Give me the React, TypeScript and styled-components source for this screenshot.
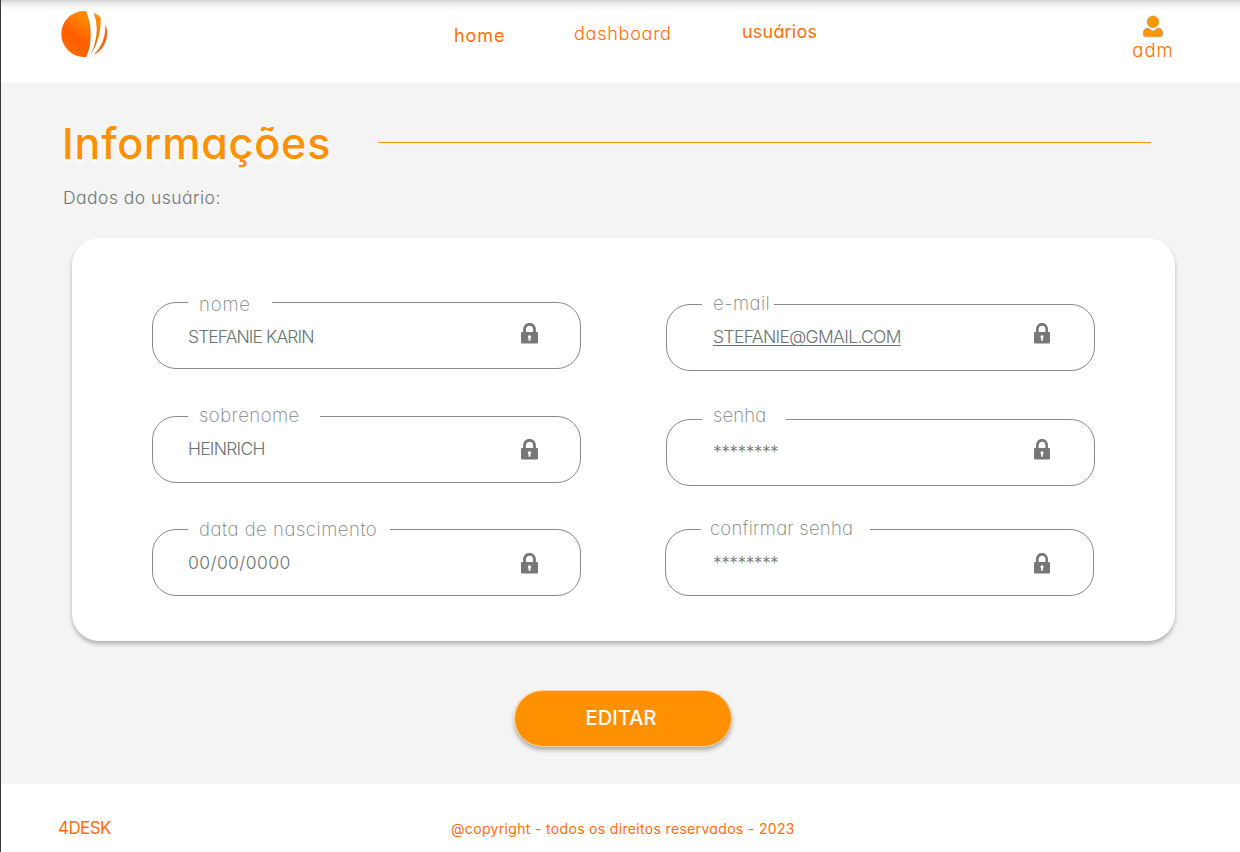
import React from "react";
import styled, { createGlobalStyle } from "styled-components";

const GlobalStyle = createGlobalStyle`
  *, *::before, *::after { box-sizing: border-box; }
  body {
    margin: 0;
    background: #fff;
    font-family: Inter, "Open Sans", sans-serif;
    font-feature-settings: "cv11" 1;
  }
`;

const Page = styled.div`
  display: flex;
  flex-direction: column;
  width: 1240px;
  height: 852px;
  overflow: hidden;
  border-left: 1px solid #38383d;
  background: #fff;
`;

const Header = styled.header`
  display: flex;
  align-items: flex-start;
  height: 83px;
  padding-left: 59px;
  background: linear-gradient(#cfcfcf 0, #d9d9d9 1px, #e8e8e8 3px, #f6f6f6 6px, #fff 11px);
`;

const Logo = styled.svg`
  width: 48px;
  height: 48px;
  margin-top: 10px;
`;

const Nav = styled.nav`
  display: flex;
  align-items: flex-start;
  width: 1022px;
  padding-left: 346px;
`;

const NavLink = styled.a<{ $width: number; $top: number; $weight: number; $spacing: number }>`
  width: ${(p) => p.$width}px;
  margin-top: ${(p) => p.$top}px;
  font-size: 18px;
  line-height: 20px;
  font-weight: ${(p) => p.$weight};
  letter-spacing: ${(p) => p.$spacing}px;
  color: #ff6f0a;
  white-space: nowrap;
`;

const Account = styled.div`
  display: flex;
  flex-direction: column;
  align-items: center;
  width: 46px;
  padding-top: 15px;
  font-size: 18.5px;
  line-height: 20px;
  font-weight: 350;
  letter-spacing: 1.1px;
  color: #ff6f0a;
`;

const AccountIcon = styled.svg`
  width: 22px;
  height: 24px;
  margin-bottom: 1px;
`;

const Main = styled.main`
  height: 701px;
  padding-top: 36px;
  background: #f4f4f4;
`;

const TitleRow = styled.div`
  display: flex;
  align-items: center;
  height: 48px;
  padding-left: 61px;
`;

const Title = styled.h1`
  width: 316px;
  margin: 0;
  font-size: 43px;
  line-height: 48px;
  font-weight: 530;
  letter-spacing: 0.85px;
  color: #ff9100;
  text-shadow: 0 4px 4px #fff;
  white-space: nowrap;
`;

const Rule = styled.div`
  width: 773px;
  height: 1px;
  margin-top: -1px;
  background: #ff9100;
`;

const Subtitle = styled.p`
  margin: 21px 0 0 62px;
  font-size: 17.5px;
  line-height: 20px;
  font-weight: 300;
  letter-spacing: 0.47px;
  color: #707676;
`;

const Card = styled.section`
  display: flex;
  gap: 85px;
  width: 1103px;
  height: 403px;
  margin: 30px 0 0 71px;
  padding: 64px 0 0 80px;
  border-radius: 27px;
  background: #fff;
  box-shadow: 0 3px 4px rgba(0, 0, 0, 0.27);
`;

const Column = styled.div`
  width: 429px;
`;

const FieldBox = styled.fieldset<{ $top: number; $shift: number }>`
  display: block;
  min-width: 0;
  width: 429px;
  height: 67px;
  margin: ${(p) => p.$top}px 0 0 ${(p) => p.$shift}px;
  padding: 0;
  border: 1px solid #858a8a;
  border-radius: 24px;
`;

const Legend = styled.legend<{ $width: number; $indent: number }>`
  width: ${(p) => p.$width}px;
  height: 1px;
  margin-left: 35px;
  padding: 0 0 0 ${(p) => p.$indent}px;
`;

const LegendText = styled.div<{ $drop: number; $spacing: number }>`
  margin-top: ${(p) => p.$drop}px;
  font-size: 18.5px;
  line-height: 1px;
  font-weight: 200;
  letter-spacing: ${(p) => p.$spacing}px;
  color: #7c8282;
  white-space: nowrap;
`;

const FieldBody = styled.div<{ $indent: number }>`
  display: flex;
  align-items: flex-start;
  justify-content: space-between;
  padding: 0 42px 0 ${(p) => p.$indent}px;
`;

const Value = styled.span<{ $top: number; $spacing: number; $underline?: boolean }>`
  margin-top: ${(p) => p.$top}px;
  font-size: 17.5px;
  line-height: 20px;
  font-weight: 280;
  letter-spacing: ${(p) => p.$spacing}px;
  color: #6b7272;
  text-decoration: ${(p) => (p.$underline ? "underline" : "none")};
  text-decoration-thickness: 1px;
  text-underline-offset: 2px;
  text-decoration-skip-ink: none;
`;

const LockSvg = styled.svg<{ $top: number; $width: number; $right: number }>`
  width: ${(p) => p.$width}px;
  height: 21px;
  margin: ${(p) => p.$top}px ${(p) => p.$right}px 0 0;
`;

const EditButton = styled.button`
  display: block;
  width: 218px;
  height: 57px;
  margin: 49px 0 0 513px;
  padding: 0 4px 2px 0;
  border: 1px solid #ffd9a6;
  border-radius: 29px;
  background: #ff9100;
  box-shadow: 0 3px 4px rgba(0, 0, 0, 0.3);
  font-family: inherit;
  font-size: 20px;
  font-weight: 500;
  letter-spacing: 0.1px;
  color: #fff;
`;

const Footer = styled.footer`
  display: flex;
  height: 68px;
  padding: 34px 0 0 57px;
  line-height: 20px;
  color: #ff6f0a;
`;

const Brand = styled.span`
  width: 393px;
  font-size: 17px;
  letter-spacing: -0.6px;
`;

const Copyright = styled.span`
  margin-top: 1px;
  font-size: 14px;
  letter-spacing: 0.33px;
`;

interface FieldData {
  label: string;
  value: string;
  top: number;
  shift: number;
  gap: number;
  indent: number;
  drop: number;
  labelSpacing: number;
  valueIndent: number;
  valueTop: number;
  valueSpacing: number;
  lockTop: number;
  lockWidth: number;
  lockRight: number;
  underline?: boolean;
}

const leftFields: FieldData[] = [
  { label: "nome", value: "STEFANIE KARIN", top: 0, shift: 0, gap: 84, indent: 11, drop: 2, labelSpacing: 0.85, valueIndent: 35, valueTop: 24, valueSpacing: -0.92, lockTop: 20, lockWidth: 17, lockRight: 0 },
  { label: "sobrenome", value: "HEINRICH", top: 47, shift: 0, gap: 132, indent: 11, drop: -1, labelSpacing: 0.5, valueIndent: 35, valueTop: 22, valueSpacing: -0.75, lockTop: 22, lockWidth: 17, lockRight: 0 },
  { label: "data de nascimento", value: "00/00/0000", top: 46, shift: 0, gap: 202, indent: 11, drop: 0, labelSpacing: 0.55, valueIndent: 35, valueTop: 23, valueSpacing: 0.4, lockTop: 23, lockWidth: 17, lockRight: 0 },
];

const rightFields: FieldData[] = [
  { label: "e-mail", value: "STEFANIE@GMAIL.COM", top: 2, shift: 0, gap: 72, indent: 11, drop: -1, labelSpacing: 0.5, valueIndent: 46, valueTop: 22, valueSpacing: -0.64, lockTop: 18, lockWidth: 16, lockRight: 2, underline: true },
  { label: "senha", value: "********", top: 48, shift: 0, gap: 84, indent: 11, drop: -4, labelSpacing: 0.15, valueIndent: 46, valueTop: 22, valueSpacing: -0.6, lockTop: 19, lockWidth: 16, lockRight: 2 },
  { label: "confirmar senha", value: "********", top: 43, shift: -1, gap: 169, indent: 9, drop: -1, labelSpacing: 0.25, valueIndent: 47, valueTop: 23, valueSpacing: -0.6, lockTop: 23, lockWidth: 16, lockRight: 1 },
];

const Field = ({ f }: { f: FieldData }) => (
  <FieldBox $top={f.top} $shift={f.shift}>
    <Legend $width={f.gap} $indent={f.indent}>
      <LegendText $drop={f.drop} $spacing={f.labelSpacing}>
        {f.label}
      </LegendText>
    </Legend>
    <FieldBody $indent={f.valueIndent}>
      <Value $top={f.valueTop} $spacing={f.valueSpacing} $underline={f.underline}>
        {f.value}
      </Value>
      <LockSvg viewBox="0 0 17 21" preserveAspectRatio="none" $top={f.lockTop} $width={f.lockWidth} $right={f.lockRight}>
        <path d="M3.500 10V6.300a5 5 0 0 1 10 0V10" fill="none" stroke="#777" strokeWidth="2.8" />
        <path
          fillRule="evenodd"
          fill="#777"
          d="M1.200 9h14.600q1.200 0 1.200 1.200v9.100q0 1.200-1.200 1.200H1.200Q0 20.500 0 19.300v-9.100Q0 9 1.200 9ZM8.500 12.300a1.700 1.700 0 0 0-.9 3.100v2.300h1.800v-2.300a1.700 1.700 0 0 0-.9-3.100Z"
        />
      </LockSvg>
    </FieldBody>
  </FieldBox>
);

export default function App() {
  return (
    <>
      <GlobalStyle />
      <Page>
        <Header>
          <Logo viewBox="0 0 48 48">
            <defs>
              <linearGradient id="body" x1="0.75" y1="0.1" x2="0.35" y2="0.9">
                <stop offset="0" stopColor="#ff8c00" />
                <stop offset="0.6" stopColor="#ff5c00" />
                <stop offset="1" stopColor="#ff6a00" />
              </linearGradient>
              <linearGradient id="blade" x1="0" y1="0" x2="0" y2="1">
                <stop offset="0" stopColor="#ff9500" />
                <stop offset="0.6" stopColor="#f47a00" />
                <stop offset="1" stopColor="#c94f00" />
              </linearGradient>
            </defs>
            <path d="M25.600 1A23.050 23.050 0 1 0 26 47Q30.500 37 30.500 25 30.500 11 25.600 1Z" fill="url(#body)" />
            <path d="M25.600 1Q30.300 11 30.300 25 30.300 37 26 46.800" fill="none" stroke="#b84a00" strokeOpacity="0.5" strokeWidth="0.8" />
            <path d="M33.600 2.600Q37.500 4.300 40.800 7.800 41.500 28 30.700 44.800 41 22 33.600 2.600Z" fill="url(#blade)" />
            <path d="M45.200 14.200Q49.500 23.500 44.600 34 40.600 41.700 33.700 44.800 46.500 32.500 45.200 14.200Z" fill="#f9650f" />
          </Logo>
          <Nav>
            <NavLink $width={120} $top={26} $weight={380} $spacing={0.95}>home</NavLink>
            <NavLink $width={168} $top={24} $weight={280} $spacing={0.75}>dashboard</NavLink>
            <NavLink $width={90} $top={22} $weight={380} $spacing={0.2}>usuários</NavLink>
          </Nav>
          <Account>
            <AccountIcon viewBox="0 0 22 24">
              <g fill="#fa9600" stroke="#9b9384" strokeWidth="0.5">
                <circle cx="11" cy="6.800" r="5.900" />
                <path d="M5.500 13Q7.500 13 8.500 14.700 11 17.200 13.500 14.700 14.500 13 16.500 13 20.800 13.700 20.800 18.200 20.800 21.800 18.500 21.800H3.500Q1.200 21.800 1.200 18.200 1.200 13.700 5.500 13Z" />
              </g>
            </AccountIcon>
            adm
          </Account>
        </Header>
        <Main>
          <TitleRow>
            <Title>Informações</Title>
            <Rule />
          </TitleRow>
          <Subtitle>Dados do usuário:</Subtitle>
          <Card>
            <Column>
              {leftFields.map((f) => (
                <Field key={f.label} f={f} />
              ))}
            </Column>
            <Column>
              {rightFields.map((f) => (
                <Field key={f.label} f={f} />
              ))}
            </Column>
          </Card>
          <EditButton>EDITAR</EditButton>
        </Main>
        <Footer>
          <Brand>4DESK</Brand>
          <Copyright>@copyright - todos os direitos reservados - 2023</Copyright>
        </Footer>
      </Page>
    </>
  );
}
